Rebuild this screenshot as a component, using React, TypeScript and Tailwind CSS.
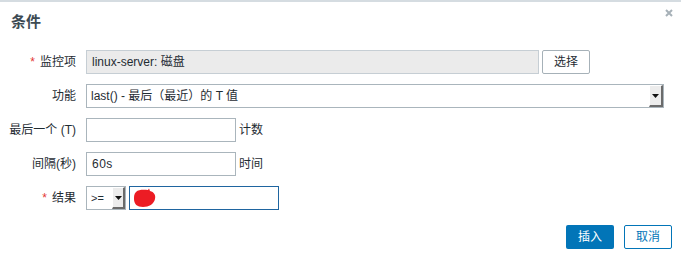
import React from "react";

const font = { fontFamily: '"Liberation Sans", Arial, "Noto Sans CJK SC", sans-serif' };

function Arrow({ className }: { className?: string }) {
  return (
    <div className={`flex items-center justify-center bg-[#ececec] border-r-2 border-b-2 border-r-[#6b6b6b] border-b-[#6b6b6b] border-l border-t border-l-white border-t-white ${className ?? ""}`}>
      <svg width="7" height="4" viewBox="0 0 7 4">
        <path d="M0 0H7L3.5 4Z" fill="#111" />
      </svg>
    </div>
  );
}

function Label({ text, required }: { text: string; required?: boolean }) {
  return (
    <div className="flex h-6 items-center justify-end whitespace-nowrap text-[12px] text-[#1f2c33]">
      {required && <span className="mr-[5px] text-[#e33734]">*</span>}
      {text}
    </div>
  );
}

export default function App() {
  return (
    <div style={font} className="relative h-[258px] w-[681px] overflow-hidden border-t-2 border-[#d5dce1] bg-white">
      <div className="flex items-start justify-between">
        <h2 className="pl-[11px] pt-[10px] text-[15px] font-bold leading-5 text-[#3c4a53]">条件</h2>
        <svg className="mr-[8px] mt-[7px]" width="8" height="8" viewBox="0 0 8 8">
          <path d="M1 1L7 7M7 1L1 7" stroke="#a7b1b8" strokeWidth="2" />
        </svg>
      </div>

      <div className="mt-[18px] grid grid-cols-[76px_1fr] gap-x-[10px] gap-y-[10px]">
        <Label text="监控项" required />
        <div className="flex gap-[3px]">
          <div className="flex h-6 w-[453px] items-center border border-[#c6ced4] bg-[#ebebeb] px-[5px] text-[12px] text-[#1f2c33]">
            linux-server: 磁盘
          </div>
          <button className="h-6 w-[48px] rounded-[2px] border border-[#a6b1b8] bg-white text-[12px] text-[#1f2c33]">选择</button>
        </div>

        <Label text="功能" />
        <div className="flex h-6 w-[578px] items-stretch border border-[#aab5bc] bg-white">
          <div className="flex flex-1 items-center px-[4px] text-[12px] text-[#1f2c33]">last() - 最后（最近）的 T 值</div>
          <Arrow className="w-[14px]" />
        </div>

        <Label text="最后一个 (T)" />
        <div className="flex items-center gap-[3px]">
          <div className="h-6 w-[150px] border border-[#aab5bc] bg-white" />
          <span className="text-[12px] text-[#1f2c33]">计数</span>
        </div>

        <Label text="间隔(秒)" />
        <div className="flex items-center gap-[3px]">
          <div className="flex h-6 w-[150px] items-center border border-[#aab5bc] bg-white px-[5px] text-[12px] tracking-[0.5px] text-[#1f2c33]">60s</div>
          <span className="text-[12px] text-[#1f2c33]">时间</span>
        </div>

        <Label text="结果" required />
        <div className="flex gap-[3px]">
          <div className="flex h-6 w-[40px] items-stretch border border-[#aab5bc] bg-white">
            <div className="flex flex-1 items-center pl-[4px] text-[11px] text-[#1f2c33]">&gt;=</div>
            <Arrow className="w-[13px]" />
          </div>
          <div className="flex h-6 w-[150px] items-center border border-[#1f65a0] bg-white pl-[3px]">
            <svg width="24" height="20" viewBox="0 0 24 20">
              <path d="M3 4C6 1 12 2 15 2L16 0.5L17 3C21 4 23 7 22 11C21 16 16 19 10 19C4 19 1 16 1 11C1 8 1 6 3 4Z" fill="#ec1c24" />
            </svg>
          </div>
        </div>
      </div>

      <div className="absolute right-[9px] top-[223px] flex gap-[10px]">
        <button className="h-6 w-[48px] rounded-[2px] bg-[#0275b8] text-[12px] text-white">插入</button>
        <button className="h-6 w-[48px] rounded-[2px] border border-[#0275b8] bg-white text-[12px] text-[#0275b8]">取消</button>
      </div>
    </div>
  );
}
